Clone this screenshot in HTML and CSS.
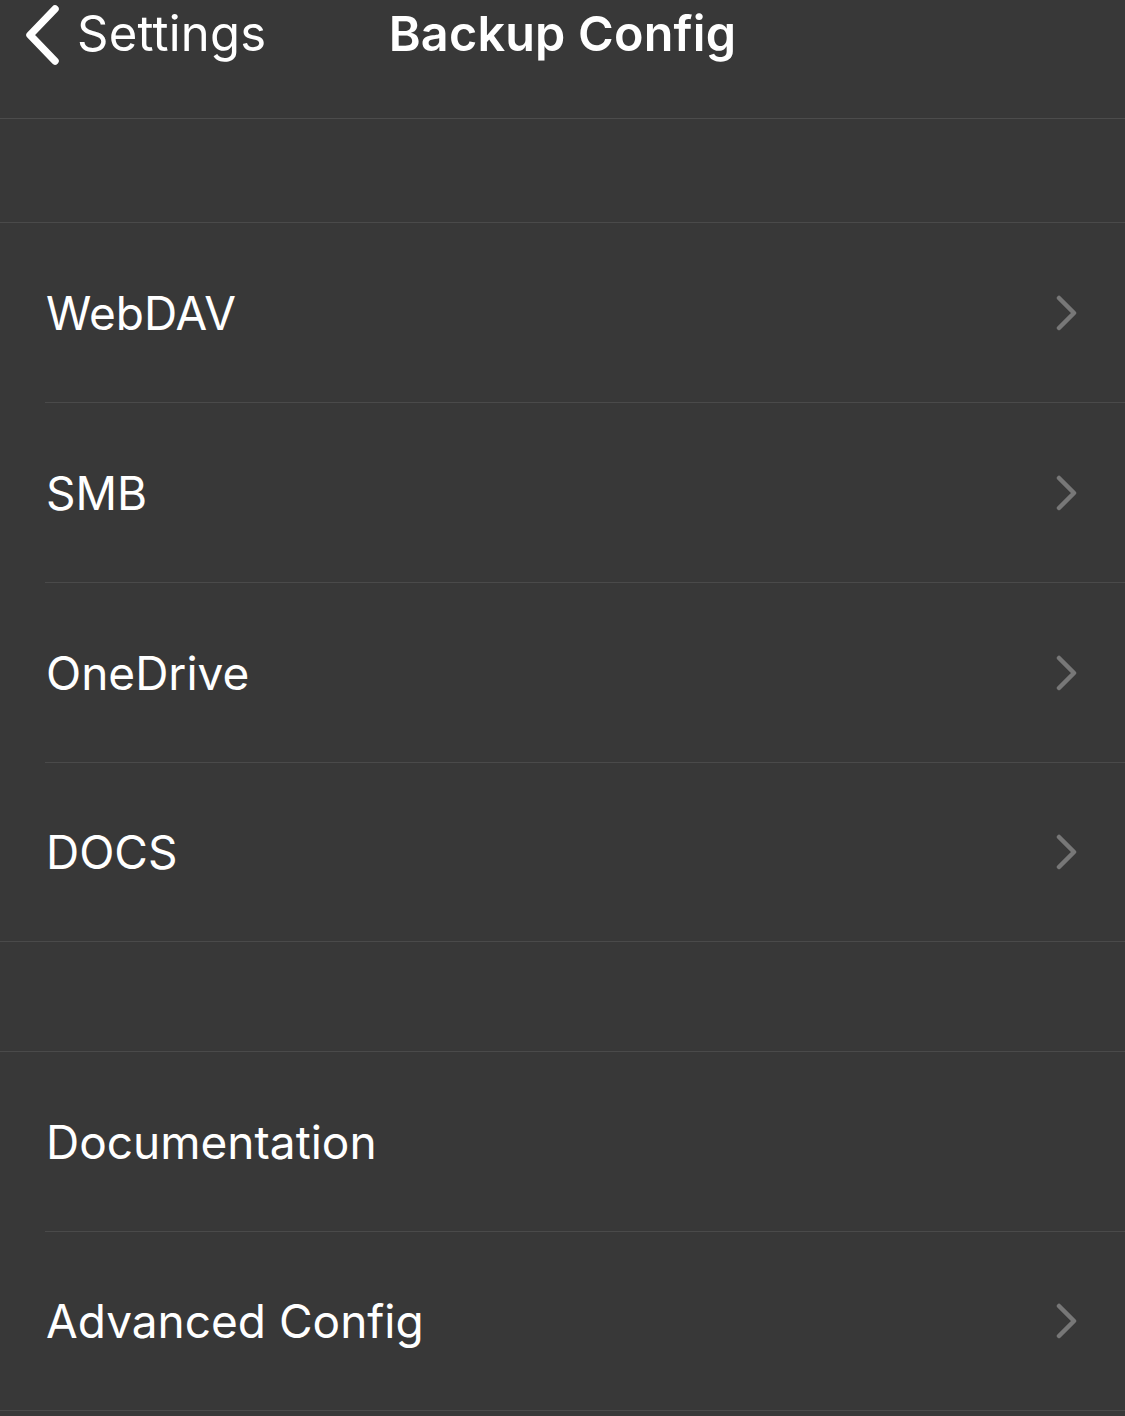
FILE: index.html
```html
<!DOCTYPE html>
<html>
<head>
<meta charset="utf-8">
<link rel="stylesheet" href="styles.css">
</head>
<body>
<header class="navbar">
  <div class="back">
    <svg class="back-icon" width="40" height="64" viewBox="0 0 40 64"><path d="M33 7 L8 33 L33 59" fill="none" stroke="#fff" stroke-width="7.5" stroke-linecap="round" stroke-linejoin="round"/></svg>
    <span class="back-label">Settings</span>
  </div>
  <h1 class="title">Backup Config</h1>
</header>

<div class="spacer spacer-top"></div>

<section class="group">
  <div class="row"><span class="label">WebDAV</span><svg class="chev" width="24" height="36" viewBox="0 0 24 36"><path d="M4 3 L19 18 L4 33" fill="none" stroke="#777" stroke-width="4.5" stroke-linecap="round" stroke-linejoin="round"/></svg></div>
  <div class="row"><span class="label">SMB</span><svg class="chev" width="24" height="36" viewBox="0 0 24 36"><path d="M4 3 L19 18 L4 33" fill="none" stroke="#777" stroke-width="4.5" stroke-linecap="round" stroke-linejoin="round"/></svg></div>
  <div class="row"><span class="label">OneDrive</span><svg class="chev" width="24" height="36" viewBox="0 0 24 36"><path d="M4 3 L19 18 L4 33" fill="none" stroke="#777" stroke-width="4.5" stroke-linecap="round" stroke-linejoin="round"/></svg></div>
  <div class="row"><span class="label">DOCS</span><svg class="chev" width="24" height="36" viewBox="0 0 24 36"><path d="M4 3 L19 18 L4 33" fill="none" stroke="#777" stroke-width="4.5" stroke-linecap="round" stroke-linejoin="round"/></svg></div>
</section>

<div class="spacer spacer-mid"></div>

<section class="group">
  <div class="row"><span class="label">Documentation</span></div>
  <div class="row"><span class="label">Advanced Config</span><svg class="chev" width="24" height="36" viewBox="0 0 24 36"><path d="M4 3 L19 18 L4 33" fill="none" stroke="#777" stroke-width="4.5" stroke-linecap="round" stroke-linejoin="round"/></svg></div>
</section>
</body>
</html>
```
FILE: styles.css
```css
html, body {
  margin: 0;
  padding: 0;
  background: #383838;
  color: #ffffff;
  font-family: Inter, "Liberation Sans", Arial, sans-serif;
}

.navbar {
  height: 118px;
  border-bottom: 1px solid #4c4c4c;
  display: flex;
  align-items: flex-start;
  justify-content: center;
  position: relative;
  box-sizing: content-box;
}

.back {
  position: absolute;
  left: 22px;
  top: 2px;
  display: flex;
  align-items: center;
  gap: 15px;
}

.back-icon {
  display: block;
}

.back-label {
  font-size: 49px;
  font-weight: 400;
  letter-spacing: 0.2px;
  line-height: 64px;
}

.title {
  margin: 0;
  margin-top: 2px;
  font-size: 48.5px;
  font-weight: 600;
  line-height: 64px;
  letter-spacing: 0.2px;
}

.spacer-top {
  height: 103px;
}

.spacer-mid {
  height: 109px;
}

.group {
  border-top: 1px solid #4a4a4a;
  border-bottom: 1px solid #4a4a4a;
}

.row {
  height: 179px;
  margin-left: 45px;
  padding-left: 1px;
  padding-right: 46px;
  display: flex;
  align-items: center;
  justify-content: space-between;
  border-bottom: 1px solid #4a4a4a;
}

.row:last-child {
  border-bottom: none;
  height: 178px;
}

.label {
  font-size: 46px;
  font-weight: 400;
  letter-spacing: 0;
}

.chev {
  display: block;
}
```
